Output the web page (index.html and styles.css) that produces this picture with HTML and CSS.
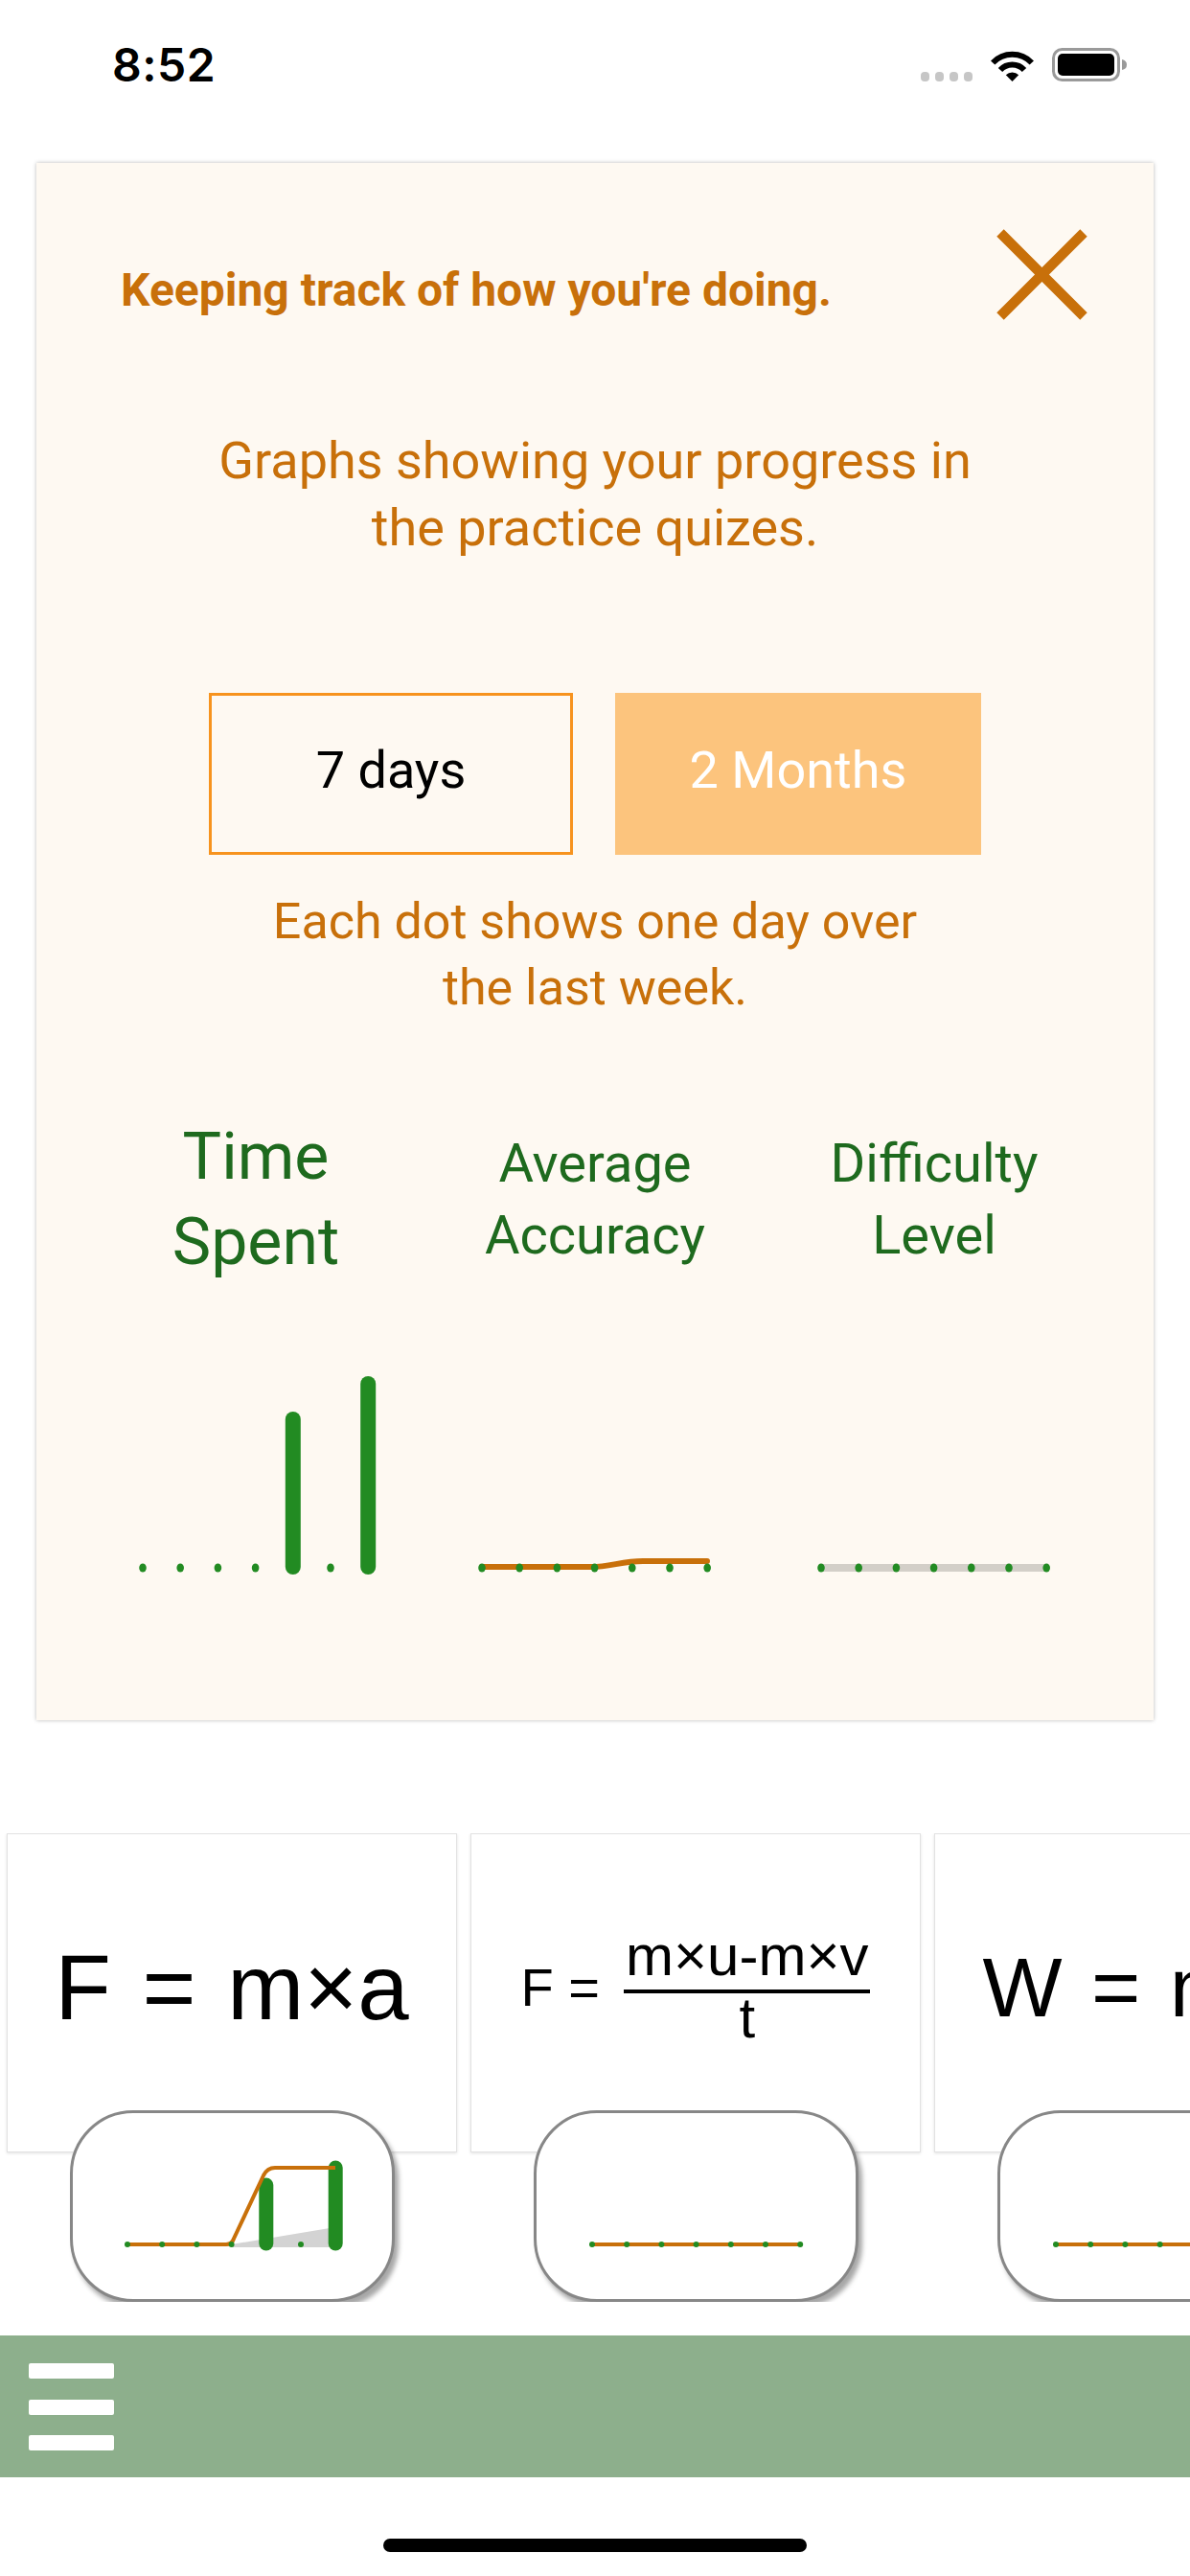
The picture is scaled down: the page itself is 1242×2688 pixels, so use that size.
FILE: index.html
```html
<!DOCTYPE html>
<html lang="en">
<head>
<meta charset="utf-8">
<title>Progress</title>
<link rel="stylesheet" href="styles.css">
</head>
<body>
<div class="screen">
  <header class="status">
    <span class="status-time">8:52</span>
    <div class="status-icons">
      <div class="signal"><i></i><i></i><i></i><i></i></div>
      <svg class="wifi" viewBox="0 0 49 35" width="49" height="35">
        <path d="M4.2 14.5 A28 28 0 0 1 44.8 14.5" fill="none" stroke="#000" stroke-width="6"/>
        <path d="M12 22 A17 17 0 0 1 37 22" fill="none" stroke="#000" stroke-width="6"/>
        <path d="M24.5 34 L17.8 27.3 A9.5 9.5 0 0 1 31.2 27.3 Z" fill="#000"/>
      </svg>
      <svg class="battery" viewBox="0 0 79 35" width="79" height="35">
        <rect x="1.5" y="1.5" width="68" height="32" rx="9" fill="none" stroke="#9a9a9a" stroke-width="3"/>
        <rect x="6" y="6" width="59" height="23" rx="5" fill="#000"/>
        <path d="M73 12 Q78 13 78 17.5 Q78 22 73 23 Z" fill="#9a9a9a"/>
      </svg>
    </div>
  </header>

  <section class="panel">
    <div class="panel-head">
      <h1 class="panel-title">Keeping track of how you're doing.</h1>
      <svg class="close-icon" viewBox="0 0 95 95" width="95" height="95">
        <path d="M4 4 L91 91 M91 4 L4 91" stroke="#c8700a" stroke-width="10.5" fill="none"/>
      </svg>
    </div>

    <p class="intro">Graphs showing your progress in<br>the practice quizes.</p>

    <div class="range">
      <button class="range-btn range-btn--outline">7 days</button>
      <button class="range-btn range-btn--filled">2 Months</button>
    </div>

    <p class="note">Each dot shows one day over<br>the last week.</p>

    <div class="metrics">
      <div class="metric">
        <h2 class="metric-title metric-title--big"><span>Time<br>Spent</span></h2>
        <svg class="metric-chart" viewBox="0 0 260 240" width="260" height="240">
          <g stroke="#228b22" stroke-width="16" stroke-linecap="round">
            <line x1="168.8" y1="61" x2="168.8" y2="215"/>
            <line x1="247.2" y1="24" x2="247.2" y2="215"/>
          </g>
          <g fill="#228b22">
            <ellipse cx="12" cy="216" rx="3.8" ry="4.6"/>
            <ellipse cx="51.2" cy="216" rx="3.8" ry="4.6"/>
            <ellipse cx="90.4" cy="216" rx="3.8" ry="4.6"/>
            <ellipse cx="129.6" cy="216" rx="3.8" ry="4.6"/>
            <ellipse cx="208" cy="216" rx="3.8" ry="4.6"/>
          </g>
        </svg>
      </div>
      <div class="metric">
        <h2 class="metric-title"><span>Average<br>Accuracy</span></h2>
        <svg class="metric-chart" viewBox="0 0 260 240" width="260" height="240">
          <path d="M12 215 H126 C146 215 158 209 180 209 H247" fill="none" stroke="#c8700a" stroke-width="6" stroke-linecap="round"/>
          <g fill="#228b22">
            <ellipse cx="12" cy="216" rx="3.8" ry="4.6"/>
            <ellipse cx="51.2" cy="216" rx="3.8" ry="4.6"/>
            <ellipse cx="90.4" cy="216" rx="3.8" ry="4.6"/>
            <ellipse cx="129.6" cy="216" rx="3.8" ry="4.6"/>
            <ellipse cx="168.8" cy="216" rx="3.8" ry="4.6"/>
            <ellipse cx="208" cy="216" rx="3.8" ry="4.6"/>
            <ellipse cx="247.2" cy="216" rx="3.8" ry="4.6"/>
          </g>
        </svg>
      </div>
      <div class="metric">
        <h2 class="metric-title"><span>Difficulty<br>Level</span></h2>
        <svg class="metric-chart" viewBox="0 0 260 240" width="260" height="240">
          <line x1="12" y1="216" x2="247.2" y2="216" stroke="#d3cfc8" stroke-width="8"/>
          <g fill="#228b22">
            <ellipse cx="12" cy="216" rx="3.8" ry="4.6"/>
            <ellipse cx="51.2" cy="216" rx="3.8" ry="4.6"/>
            <ellipse cx="90.4" cy="216" rx="3.8" ry="4.6"/>
            <ellipse cx="129.6" cy="216" rx="3.8" ry="4.6"/>
            <ellipse cx="168.8" cy="216" rx="3.8" ry="4.6"/>
            <ellipse cx="208" cy="216" rx="3.8" ry="4.6"/>
            <ellipse cx="247.2" cy="216" rx="3.8" ry="4.6"/>
          </g>
        </svg>
      </div>
    </div>
  </section>

  <div class="deck">
    <div class="deck-item">
      <div class="formula-card"><span class="formula formula--big">F = m×a</span></div>
      <div class="pill">
        <svg class="pill-chart" viewBox="0 0 333 194" width="333" height="194">
          <polygon points="165.6,137 268,120 268,140 165.6,140" fill="#d3d3d3"/>
          <g stroke="#228b22" stroke-width="15" stroke-linecap="round">
            <line x1="201.8" y1="75" x2="201.8" y2="136"/>
            <line x1="274.2" y1="57" x2="274.2" y2="136"/>
          </g>
          <path d="M57 137 H160 Q166 137 168 131 L199 65 Q203 57 211 57 H274" fill="none" stroke="#c8700a" stroke-width="4"/>
          <g fill="#228b22">
            <circle cx="57" cy="137" r="3"/>
            <circle cx="93.2" cy="137" r="3"/>
            <circle cx="129.4" cy="137" r="3"/>
            <circle cx="165.6" cy="137" r="3"/>
            <circle cx="238" cy="137" r="3"/>
          </g>
        </svg>
      </div>
    </div>
    <div class="deck-item">
      <div class="formula-card">
        <span class="formula formula--frac">
          <span class="frac-lhs">F =</span>
          <span class="frac">
            <span class="frac-num">m×u-m×v</span>
            <span class="frac-den">t</span>
          </span>
        </span>
      </div>
      <div class="pill">
        <svg class="pill-chart" viewBox="0 0 333 194" width="333" height="194">
          <line x1="58" y1="137" x2="275" y2="137" stroke="#c8700a" stroke-width="4"/>
          <g fill="#228b22">
            <circle cx="58" cy="137" r="3"/>
            <circle cx="94.2" cy="137" r="3"/>
            <circle cx="130.4" cy="137" r="3"/>
            <circle cx="166.6" cy="137" r="3"/>
            <circle cx="202.8" cy="137" r="3"/>
            <circle cx="239" cy="137" r="3"/>
            <circle cx="275.2" cy="137" r="3"/>
          </g>
        </svg>
      </div>
    </div>
    <div class="deck-item">
      <div class="formula-card"><span class="formula formula--mid">W = m×g</span></div>
      <div class="pill">
        <svg class="pill-chart" viewBox="0 0 333 194" width="333" height="194">
          <line x1="58" y1="137" x2="275" y2="137" stroke="#c8700a" stroke-width="4"/>
          <g fill="#228b22">
            <circle cx="58" cy="137" r="3"/>
            <circle cx="94.2" cy="137" r="3"/>
            <circle cx="130.4" cy="137" r="3"/>
            <circle cx="166.6" cy="137" r="3"/>
            <circle cx="202.8" cy="137" r="3"/>
            <circle cx="239" cy="137" r="3"/>
            <circle cx="275.2" cy="137" r="3"/>
          </g>
        </svg>
      </div>
    </div>
  </div>

  <nav class="tabbar">
    <div class="hamburger"><i></i><i></i><i></i></div>
  </nav>

  <div class="home-indicator"></div>
</div>
</body>
</html>
```

FILE: styles.css
```css
* { box-sizing: border-box; }

html, body {
  margin: 0;
  padding: 0;
  background: #ffffff;
}

body {
  font-family: Roboto, "Noto Sans", sans-serif;
}

.screen {
  width: 1242px;
  height: 2688px;
  overflow: hidden;
  background: #ffffff;
}

/* Status bar */
.status {
  height: 170px;
  display: flex;
  justify-content: space-between;
  align-items: flex-start;
  padding: 0 65px 0 117px;
}

.status-time {
  margin-top: 39px;
  font-family: Inter, "Liberation Sans", sans-serif;
  font-weight: 600;
  font-size: 48px;
  line-height: 58px;
  color: #000;
  letter-spacing: 0.5px;
}

.status-icons {
  margin-top: 50px;
  display: flex;
  align-items: flex-start;
}

.signal {
  display: flex;
  gap: 6px;
  margin-top: 25px;
  margin-right: 17px;
}

.signal i {
  display: block;
  width: 9px;
  height: 10px;
  border-radius: 4px;
  background: #c6c6c6;
}

.wifi {
  display: block;
  margin-top: 1px;
  margin-right: 17px;
}

.battery {
  display: block;
}

/* Progress panel */
.panel {
  margin: 0 38px;
  background: #fef9f2;
  box-shadow: 0 0 4px rgba(0, 0, 0, 0.28);
  padding-bottom: 135px;
}

.panel-head {
  display: flex;
  justify-content: space-between;
  align-items: flex-start;
  padding: 69px 69px 0 88px;
}

.panel-title {
  margin: 36px 0 0;
  font-weight: 700;
  font-size: 48px;
  line-height: 56px;
  color: #c8700a;
}

.close-icon {
  display: block;
  flex: none;
}

.intro {
  margin: 112px 0 0;
  text-align: center;
  font-size: 54px;
  line-height: 70px;
  color: #c8700a;
}

.range {
  margin-top: 137px;
  display: flex;
  justify-content: center;
  gap: 44px;
}

.range-btn {
  height: 169px;
  font-family: Roboto, "Noto Sans", sans-serif;
  font-size: 54px;
  padding: 0 0 8px;
  border-radius: 0;
}

.range-btn--outline {
  width: 380px;
  background: transparent;
  border: 3px solid #f7931e;
  color: #000;
}

.range-btn--filled {
  width: 382px;
  background: #fcc47d;
  border: 3px solid #fcc47d;
  color: #ffffff;
}

.note {
  margin: 35px 0 0;
  text-align: center;
  font-size: 52px;
  line-height: 69px;
  color: #c8700a;
}

.metrics {
  margin-top: 98px;
  padding: 0 52px;
  display: grid;
  grid-template-columns: repeat(3, 1fr);
}

.metric {
  display: flex;
  flex-direction: column;
  align-items: center;
}

.metric-title {
  margin: 0;
  height: 178px;
  display: flex;
  align-items: center;
  justify-content: center;
  text-align: center;
  font-weight: 400;
  font-size: 56px;
  line-height: 75px;
  color: #1e6a1e;
}

.metric-title--big {
  font-size: 68px;
  line-height: 89px;
}

.metric-chart {
  display: block;
  margin-top: 79px;
}

/* Formula deck */
.deck {
  margin-top: 118px;
  display: flex;
  gap: 14px;
  padding-left: 7px;
  overflow: hidden;
}

.deck-item {
  flex: 0 0 470px;
  display: flex;
  flex-direction: column;
}

.formula-card {
  height: 333px;
  background: #ffffff;
  border: 1px solid #e2e2e2;
  box-shadow: 0 1px 3px rgba(0, 0, 0, 0.12);
  display: flex;
  align-items: center;
  justify-content: center;
  padding-bottom: 12px;
}

.formula {
  font-family: "Liberation Sans", Arial, sans-serif;
  color: #000;
  line-height: 1;
  white-space: nowrap;
}

.formula--big {
  font-size: 96px;
  word-spacing: 6px;
}

.formula--mid {
  font-size: 88px;
  word-spacing: 6px;
}

.formula--frac {
  display: inline-flex;
  align-items: center;
  gap: 25px;
}

.frac-lhs {
  font-size: 56px;
  line-height: 56px;
}

.frac {
  display: inline-flex;
  flex-direction: column;
  align-items: center;
}

.frac-num {
  font-size: 60px;
  line-height: 64px;
  padding: 0 2px 3px;
  border-bottom: 4px solid #000;
}

.frac-den {
  font-size: 60px;
  line-height: 64px;
  margin-top: -6px;
}

.pill {
  position: relative;
  z-index: 1;
  margin: -44px 0 0 66px;
  width: 339px;
  height: 200px;
  border: 3px solid #878787;
  border-radius: 66px;
  background: #ffffff;
  box-shadow: 4px 6px 5px rgba(0, 0, 0, 0.35);
}

.pill-chart {
  display: block;
}

/* Tab bar */
.tabbar {
  margin-top: 35px;
  height: 148px;
  background: #8daf8c;
  padding: 29px 0 0 30px;
}

.hamburger {
  display: flex;
  flex-direction: column;
  gap: 21.5px;
}

.hamburger i {
  display: block;
  width: 89px;
  height: 16px;
  border-radius: 2px;
  background: #ffffff;
}

.home-indicator {
  margin: 64px auto 0;
  width: 442px;
  height: 14px;
  border-radius: 7px;
  background: #000;
}
```
